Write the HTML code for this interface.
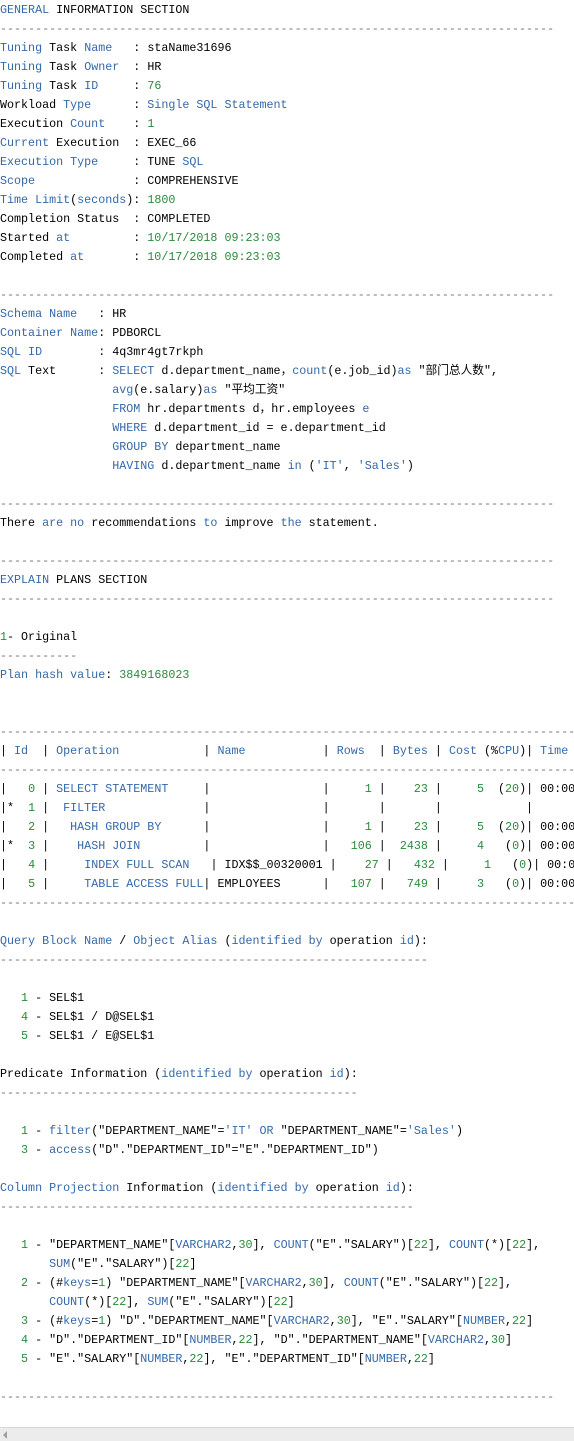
<!DOCTYPE html>
<html><head><meta charset="utf-8"><style>
html,body{margin:0;padding:0;background:#fff;width:574px;height:1440px;overflow:hidden}
pre{margin:0;padding:1px 0 0 0;font-family:"Liberation Mono","Noto Sans CJK SC",monospace;font-size:11.7px;line-height:19px;color:#000;white-space:pre;overflow:hidden;width:574px;height:1426px}
.b{color:#3568a8}.g{color:#2a8a3a}.d{color:#777}
.sb{position:absolute;left:0;top:1427px;width:574px;height:13px;background:#ececec;border-top:1px solid #d8d8d8}
.ar{position:absolute;left:3px;top:3px;width:0;height:0;border-top:4px solid transparent;border-bottom:4px solid transparent;border-right:4px solid #a0a0a0}
</style></head><body><pre><span class="b">GENERAL</span> INFORMATION SECTION
<span class="d">-------------------------------------------------------------------------------</span>
<span class="b">Tuning</span> Task <span class="b">Name</span>   : staName31696
<span class="b">Tuning</span> Task <span class="b">Owner</span>  : HR
<span class="b">Tuning</span> Task <span class="b">ID</span>     : <span class="g">76</span>
Workload <span class="b">Type</span>      : <span class="b">Single SQL Statement</span>
Execution <span class="b">Count</span>    : <span class="g">1</span>
<span class="b">Current</span> Execution  : EXEC_66
<span class="b">Execution Type</span>     : TUNE <span class="b">SQL</span>
<span class="b">Scope</span>              : COMPREHENSIVE
<span class="b">Time Limit</span>(<span class="b">seconds</span>): <span class="g">1800</span>
Completion Status  : COMPLETED
Started <span class="b">at</span>         : <span class="g">10/17/2018 09:23:03</span>
Completed <span class="b">at</span>       : <span class="g">10/17/2018 09:23:03</span>

<span class="d">-------------------------------------------------------------------------------</span>
<span class="b">Schema Name</span>   : HR
<span class="b">Container Name</span>: PDBORCL
<span class="b">SQL ID</span>        : 4q3mr4gt7rkph
<span class="b">SQL</span> Text      : <span class="b">SELECT</span> d.department_name，<span class="b">count</span>(e.job_id)<span class="b">as</span> "部门总人数",
                <span class="b">avg</span>(e.salary)<span class="b">as</span> "平均工资"
                <span class="b">FROM</span> hr.departments d，hr.employees <span class="b">e</span>
                <span class="b">WHERE</span> d.department_id = e.department_id
                <span class="b">GROUP BY</span> department_name
                <span class="b">HAVING</span> d.department_name <span class="b">in</span> (<span class="b">'IT'</span>, <span class="b">'Sales'</span>)

<span class="d">-------------------------------------------------------------------------------</span>
There <span class="b">are no</span> recommendations <span class="b">to</span> improve <span class="b">the</span> statement.

<span class="d">-------------------------------------------------------------------------------</span>
<span class="b">EXPLAIN</span> PLANS SECTION
<span class="d">-------------------------------------------------------------------------------</span>

<span class="g">1</span>- Original
<span class="d">-----------</span>
<span class="b">Plan hash value</span>: <span class="g">3849168023</span>


<span class="d">-------------------------------------------------------------------------------------</span>
| <span class="b">Id</span>  | <span class="b">Operation</span>            | <span class="b">Name</span>           | <span class="b">Rows</span>  | <span class="b">Bytes</span> | <span class="b">Cost</span> (%<span class="b">CPU</span>)| <span class="b">Time</span>     |
<span class="d">-------------------------------------------------------------------------------------</span>
|   <span class="g">0</span> | <span class="b">SELECT STATEMENT</span>     |                |     <span class="g">1</span> |    <span class="g">23</span> |     <span class="g">5</span>  (<span class="g">20</span>)| 00:00:01 |
|*  <span class="g">1</span> |  <span class="b">FILTER</span>              |                |       |       |            |          |
|   <span class="g">2</span> |   <span class="b">HASH GROUP BY</span>      |                |     <span class="g">1</span> |    <span class="g">23</span> |     <span class="g">5</span>  (<span class="g">20</span>)| 00:00:01 |
|*  <span class="g">3</span> |    <span class="b">HASH JOIN</span>         |                |   <span class="g">106</span> |  <span class="g">2438</span> |     <span class="g">4</span>   (<span class="g">0</span>)| 00:00:01 |
|   <span class="g">4</span> |     <span class="b">INDEX FULL SCAN</span>   | IDX$$_00320001 |    <span class="g">27</span> |   <span class="g">432</span> |     <span class="g">1</span>   (<span class="g">0</span>)| 00:00:01 |
|   <span class="g">5</span> |     <span class="b">TABLE ACCESS FULL</span>| EMPLOYEES      |   <span class="g">107</span> |   <span class="g">749</span> |     <span class="g">3</span>   (<span class="g">0</span>)| 00:00:01 |
<span class="d">-------------------------------------------------------------------------------------</span>

<span class="b">Query Block Name</span> / <span class="b">Object Alias</span> (<span class="b">identified by</span> operation <span class="b">id</span>):
<span class="d">-------------------------------------------------------------</span>

   <span class="g">1</span> - SEL$1
   <span class="g">4</span> - SEL$1 / D@SEL$1
   <span class="g">5</span> - SEL$1 / E@SEL$1

Predicate Information (<span class="b">identified by</span> operation <span class="b">id</span>):
<span class="d">---------------------------------------------------</span>

   <span class="g">1</span> - <span class="b">filter</span>("DEPARTMENT_NAME"=<span class="b">'IT'</span> <span class="b">OR</span> "DEPARTMENT_NAME"=<span class="b">'Sales'</span>)
   <span class="g">3</span> - <span class="b">access</span>("D"."DEPARTMENT_ID"="E"."DEPARTMENT_ID")

<span class="b">Column Projection</span> Information (<span class="b">identified by</span> operation <span class="b">id</span>):
<span class="d">-----------------------------------------------------------</span>

   <span class="g">1</span> - "DEPARTMENT_NAME"[<span class="b">VARCHAR2</span>,<span class="g">30</span>], <span class="b">COUNT</span>("E"."SALARY")[<span class="g">22</span>], <span class="b">COUNT</span>(*)[<span class="g">22</span>],
       <span class="b">SUM</span>("E"."SALARY")[<span class="g">22</span>]
   <span class="g">2</span> - (#<span class="b">keys</span>=<span class="g">1</span>) "DEPARTMENT_NAME"[<span class="b">VARCHAR2</span>,<span class="g">30</span>], <span class="b">COUNT</span>("E"."SALARY")[<span class="g">22</span>],
       <span class="b">COUNT</span>(*)[<span class="g">22</span>], <span class="b">SUM</span>("E"."SALARY")[<span class="g">22</span>]
   <span class="g">3</span> - (#<span class="b">keys</span>=<span class="g">1</span>) "D"."DEPARTMENT_NAME"[<span class="b">VARCHAR2</span>,<span class="g">30</span>], "E"."SALARY"[<span class="b">NUMBER</span>,<span class="g">22</span>]
   <span class="g">4</span> - "D"."DEPARTMENT_ID"[<span class="b">NUMBER</span>,<span class="g">22</span>], "D"."DEPARTMENT_NAME"[<span class="b">VARCHAR2</span>,<span class="g">30</span>]
   <span class="g">5</span> - "E"."SALARY"[<span class="b">NUMBER</span>,<span class="g">22</span>], "E"."DEPARTMENT_ID"[<span class="b">NUMBER</span>,<span class="g">22</span>]

<span class="d">-------------------------------------------------------------------------------</span>
</pre><div class="sb"><div class="ar"></div></div></body></html>
